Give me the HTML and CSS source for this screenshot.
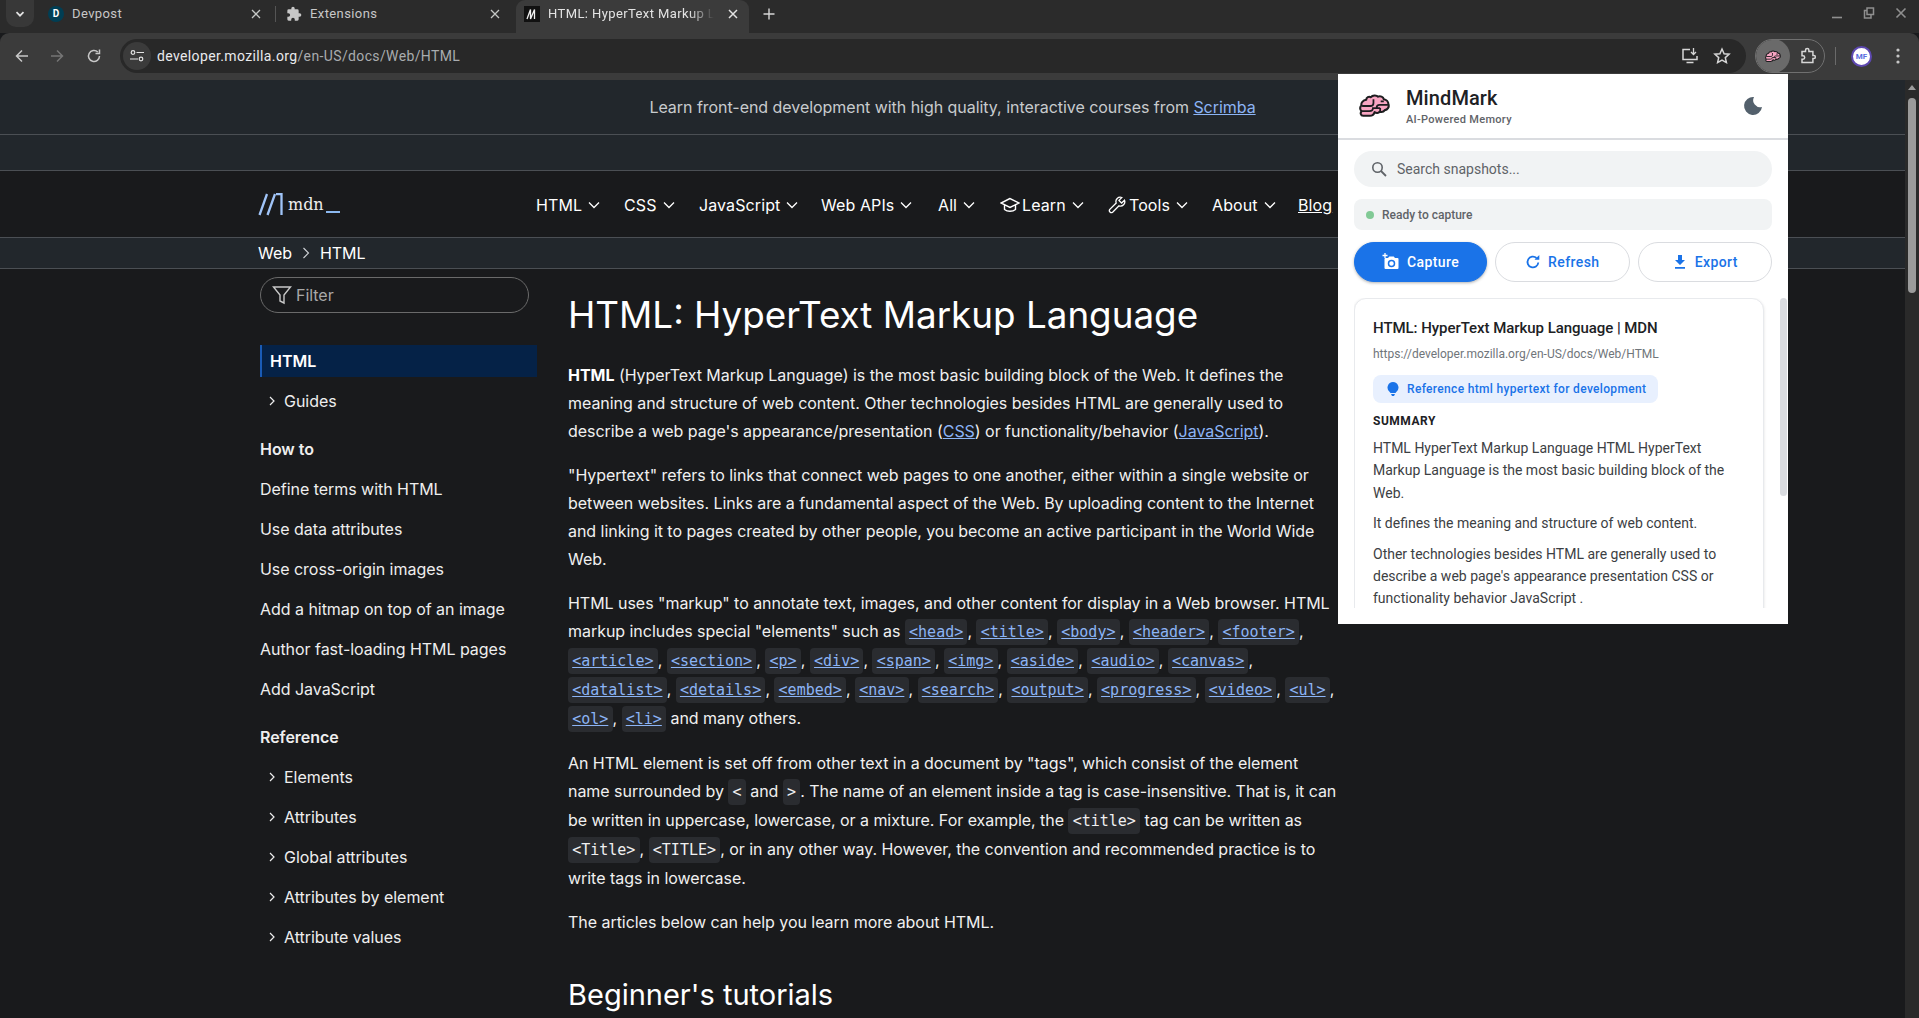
FILE: index.html
```html
<!DOCTYPE html>
<html lang="en">
<head>
<meta charset="utf-8">
<title>HTML: HyperText Markup Language | MDN</title>
<link rel="stylesheet" href="styles.css">
</head>
<body>
<div class="window">
  <header class="tabstrip">
    <div class="tab-search"><svg width="12" height="12" viewBox="0 0 12 12"><path d="M2.500 4.200 6 7.700l3.500-3.500" fill="none" stroke="#e3e3e3" stroke-width="1.700"/></svg></div>
    <div class="tab tab-first">
      <span class="fav fav-d">D</span><span class="tab-title">Devpost</span>
      <svg class="tab-x" width="12" height="12" viewBox="0 0 12 12"><path d="M2 2l8 8M10 2l-8 8" stroke="#c4c7c5" stroke-width="1.300"/></svg>
    </div>
    <div class="tab-sep"></div>
    <div class="tab tab-second">
      <svg class="fav" width="16" height="16" viewBox="0 0 24 24"><path d="M20.500 11H19V7a2 2 0 0 0-2-2h-4V3.500a2.500 2.500 0 0 0-5 0V5H4a2 2 0 0 0-2 2v3.800h1.500a2.700 2.700 0 0 1 0 5.400H2V20a2 2 0 0 0 2 2h3.800v-1.500a2.700 2.700 0 0 1 5.400 0V22H17a2 2 0 0 0 2-2v-4h1.500a2.500 2.500 0 0 0 0-5z" fill="#c7c7c7"/></svg>
      <span class="tab-title">Extensions</span>
      <svg class="tab-x" width="12" height="12" viewBox="0 0 12 12"><path d="M2 2l8 8M10 2l-8 8" stroke="#c4c7c5" stroke-width="1.300"/></svg>
    </div>
    <div class="tab tab-active">
      <span class="fav fav-m"><svg width="12" height="12" viewBox="0 0 12 12"><path d="M1 11 4.500 1.500V11L8.500 1.500V11" fill="none" stroke="#f0f0f0" stroke-width="1.300"/></svg></span>
      <span class="tab-title tab-fade">HTML: HyperText Markup Language | MDN</span>
      <svg class="tab-x" width="12" height="12" viewBox="0 0 12 12"><path d="M2 2l8 8M10 2l-8 8" stroke="#e3e3e3" stroke-width="1.500"/></svg>
    </div>
    <svg class="tab-plus" width="14" height="14" viewBox="0 0 14 14"><path d="M7 1.500v11M1.500 7h11" stroke="#d6d6d6" stroke-width="1.400"/></svg>
    <div class="win-controls">
      <svg width="12" height="12" viewBox="0 0 12 12"><path d="M1 10.500h10" stroke="#8f8f8f" stroke-width="1.600"/></svg>
      <svg width="12" height="12" viewBox="0 0 12 12"><path d="M4 1h6.500v6.500H4zM4 3.500H1.500V11h6.500V8" fill="none" stroke="#8f8f8f" stroke-width="1.500"/></svg>
      <svg width="12" height="12" viewBox="0 0 12 12"><path d="M1.500 1.500l9 9M10.500 1.500l-9 9" stroke="#8f8f8f" stroke-width="1.600"/></svg>
    </div>
  </header>

  <nav class="toolbar">
    <svg class="tb-icon" width="16" height="16" viewBox="0 0 16 16"><path d="M14 8H2.500M8 2.500 2.500 8 8 13.500" fill="none" stroke="#c7c7c7" stroke-width="1.500"/></svg>
    <svg class="tb-icon tb-forward" width="16" height="16" viewBox="0 0 16 16"><path d="M2 8h11.500M8 2.500 13.500 8 8 13.500" fill="none" stroke="#757575" stroke-width="1.500"/></svg>
    <svg class="tb-icon tb-reload" width="16" height="16" viewBox="0 0 16 16"><path d="M13.500 8A5.500 5.500 0 1 1 11.800 4M13.500 1.500v4h-4" fill="none" stroke="#c7c7c7" stroke-width="1.500"/></svg>
    <div class="omnibox">
      <span class="tune"><svg width="16" height="16" viewBox="0 0 16 16"><circle cx="4" cy="4.500" r="1.800" fill="none" stroke="#e3e3e3" stroke-width="1.200"/><path d="M7.500 4.500H15M1 11h8" stroke="#e3e3e3" stroke-width="1.200"/><circle cx="12" cy="11" r="1.800" fill="none" stroke="#e3e3e3" stroke-width="1.200"/></svg></span>
      <span class="url"><span class="url-host">developer.mozilla.org</span>/en-US/docs/Web/HTML</span>
      <svg class="omni-install" width="18" height="18" viewBox="0 0 18 18"><path d="M9 2.500H2v10h14V9M5.500 15.500h7" fill="none" stroke="#d6d6d6" stroke-width="1.500"/><path d="M12.500 1v6M10 5l2.500 2.500L15 5" fill="none" stroke="#d6d6d6" stroke-width="1.300"/></svg>
      <svg class="omni-star" width="18" height="18" viewBox="0 0 18 18"><path d="M9 2l2.100 4.700 5 .5-3.800 3.400 1.100 5L9 13l-4.400 2.600 1.100-5L1.900 7.200l5-.5z" fill="none" stroke="#d6d6d6" stroke-width="1.500"/></svg>
    </div>
    <div class="ext-pill">
      <span class="ext-active"><svg width="16" height="13" viewBox="0 0 30 23"><use href="#brain"/></svg></span>
      <svg class="ext-puzzle" width="18" height="18" viewBox="0 0 18 18"><path d="M3 4.500h3.500V3.200a1.700 1.700 0 0 1 3.400 0v1.300h4v4h1a1.500 1.500 0 0 1 0 3h-1v4H3v-3.300h1a1.700 1.700 0 0 0 0-3.400H3z" fill="none" stroke="#d6d6d6" stroke-width="1.500"/></svg>
    </div>
    <div class="tb-divider"></div>
    <div class="avatar"><span>MF</span></div>
    <svg class="tb-menu" width="4" height="16" viewBox="0 0 4 16"><circle cx="2" cy="2" r="1.600" fill="#c7c7c7"/><circle cx="2" cy="8" r="1.600" fill="#c7c7c7"/><circle cx="2" cy="14" r="1.600" fill="#c7c7c7"/></svg>
  </nav>

  <div class="viewport">
    <div class="page">
      <div class="banner">Learn front-end development with high quality, interactive courses from <a href="#">Scrimba</a></div>
      <div class="stripe"></div>
      <div class="mdn-nav">
        <a class="logo" href="#">
          <svg width="26" height="23" viewBox="0 0 26 23"><path d="M1.500 22 9 1M9.500 22 17 1M18 1h5.500v21" fill="none" stroke="#a0c4f8" stroke-width="2.300"/></svg>
          <span class="logo-text">mdn</span><span class="logo-bar"></span>
        </a>
        <ul class="menu">
          <li class="m-html">HTML<svg class="chev"><use href="#chev"/></svg></li>
          <li class="m-css">CSS<svg class="chev"><use href="#chev"/></svg></li>
          <li class="m-js">JavaScript<svg class="chev"><use href="#chev"/></svg></li>
          <li class="m-web">Web APIs<svg class="chev"><use href="#chev"/></svg></li>
          <li class="m-all">All<svg class="chev"><use href="#chev"/></svg></li>
          <li class="m-learn"><svg width="20" height="16" viewBox="0 0 20 16"><path d="M10 1.500 1 6l9 4.500L19 6zM4.500 8v4.500c3 2.300 8 2.300 11 0V8" fill="none" stroke="#fff" stroke-width="1.400"/></svg>Learn<svg class="chev"><use href="#chev"/></svg></li>
          <li class="m-tools"><svg width="18" height="18" viewBox="0 0 18 18"><path d="M16.500 4.200 13.600 7 11 4.400l2.800-2.900a4.300 4.300 0 0 0-5.600 5.500L1.800 13.400a2 2 0 0 0 2.800 2.800L11 9.800a4.300 4.300 0 0 0 5.500-5.600z" fill="none" stroke="#fff" stroke-width="1.300"/></svg>Tools<svg class="chev"><use href="#chev"/></svg></li>
          <li class="m-about">About<svg class="chev"><use href="#chev"/></svg></li>
          <li class="m-blog"><a href="#">Blog</a></li>
        </ul>
      </div>
      <div class="crumbs"><span>Web</span><svg width="12" height="12" viewBox="0 0 12 12"><path d="M3.500 1 8.500 6l-5 5" fill="none" stroke="#cfd2d6" stroke-width="1.100"/></svg><span>HTML</span></div>
      <div class="main">
        <aside class="sidebar">
          <div class="filter"><svg width="20" height="20" viewBox="0 0 20 20"><path d="M1.500 2h17l-6.500 8v8l-4-2v-6z" fill="none" stroke="#c8c8c8" stroke-width="1.400"/></svg><span>Filter</span></div>
          <div class="side-current">HTML</div>
          <div class="side-item side-sub"><svg class="side-chev"><use href="#sidechev"/></svg>Guides</div>
          <div class="side-head">How to</div>
          <div class="side-item">Define terms with HTML</div>
          <div class="side-item">Use data attributes</div>
          <div class="side-item">Use cross-origin images</div>
          <div class="side-item">Add a hitmap on top of an image</div>
          <div class="side-item">Author fast-loading HTML pages</div>
          <div class="side-item">Add JavaScript</div>
          <div class="side-head">Reference</div>
          <div class="side-item side-sub"><svg class="side-chev"><use href="#sidechev"/></svg>Elements</div>
          <div class="side-item side-sub"><svg class="side-chev"><use href="#sidechev"/></svg>Attributes</div>
          <div class="side-item side-sub"><svg class="side-chev"><use href="#sidechev"/></svg>Global attributes</div>
          <div class="side-item side-sub"><svg class="side-chev"><use href="#sidechev"/></svg>Attributes by element</div>
          <div class="side-item side-sub"><svg class="side-chev"><use href="#sidechev"/></svg>Attribute values</div>
        </aside>
        <article class="article">
          <h1>HTML: HyperText Markup Language</h1>
          <p><strong>HTML</strong> (HyperText Markup Language) is the most basic building block of the Web. It defines the meaning and structure of web content. Other technologies besides HTML are generally used to describe a web page's appearance/presentation (<a href="#">CSS</a>) or functionality/behavior (<a href="#">JavaScript</a>).</p>
          <p>"Hypertext" refers to links that connect web pages to one another, either within a single website or between websites. Links are a fundamental aspect of the Web. By uploading content to the Internet and linking it to pages created by other people, you become an active participant in the World Wide Web.</p>
          <p>HTML uses "markup" to annotate text, images, and other content for display in a Web browser. HTML markup includes special "elements" such as <a href="#"><code>&lt;head&gt;</code></a>, <a href="#"><code>&lt;title&gt;</code></a>, <a href="#"><code>&lt;body&gt;</code></a>, <a href="#"><code>&lt;header&gt;</code></a>, <a href="#"><code>&lt;footer&gt;</code></a>, <a href="#"><code>&lt;article&gt;</code></a>, <a href="#"><code>&lt;section&gt;</code></a>, <a href="#"><code>&lt;p&gt;</code></a>, <a href="#"><code>&lt;div&gt;</code></a>, <a href="#"><code>&lt;span&gt;</code></a>, <a href="#"><code>&lt;img&gt;</code></a>, <a href="#"><code>&lt;aside&gt;</code></a>, <a href="#"><code>&lt;audio&gt;</code></a>, <a href="#"><code>&lt;canvas&gt;</code></a>, <a href="#"><code>&lt;datalist&gt;</code></a>, <a href="#"><code>&lt;details&gt;</code></a>, <a href="#"><code>&lt;embed&gt;</code></a>, <a href="#"><code>&lt;nav&gt;</code></a>, <a href="#"><code>&lt;search&gt;</code></a>, <a href="#"><code>&lt;output&gt;</code></a>, <a href="#"><code>&lt;progress&gt;</code></a>, <a href="#"><code>&lt;video&gt;</code></a>, <a href="#"><code>&lt;ul&gt;</code></a>, <a href="#"><code>&lt;ol&gt;</code></a>, <a href="#"><code>&lt;li&gt;</code></a> and many others.</p>
          <p>An HTML element is set off from other text in a document by "tags", which consist of the element name surrounded by <code>&lt;</code> and <code>&gt;</code>. The name of an element inside a tag is case-insensitive. That is, it can be written in uppercase, lowercase, or a mixture. For example, the <code>&lt;title&gt;</code> tag can be written as <code>&lt;Title&gt;</code>, <code>&lt;TITLE&gt;</code>, or in any other way. However, the convention and recommended practice is to write tags in lowercase.</p>
          <p>The articles below can help you learn more about HTML.</p>
          <h2>Beginner's tutorials</h2>
        </article>
      </div>
    </div>
    <div class="scrollbar">
      <span class="sb-arrow"></span>
      <span class="sb-thumb"></span>
    </div>
  </div>

  <section class="popup">
    <div class="pop-head">
      <svg class="pop-logo" width="31" height="24" viewBox="0 0 30 23">
        <g id="brain">
          <path d="M7 5.500C7 3 9.500 2 11.500 3 13 .8 17 .8 18.500 2.500c2-1 5 0 5.500 2.500 2.500.3 4.500 2.500 4.500 5 1 2.500-1 5-3.500 5.500-1 1.500-3 2-5 1.500-1 1.500-3.500 1.500-5 .5-.5 2-2 3.500-4.500 3.500H4c-2.500 0-3-3-1.500-4.500C.5 15 .8 12 2.500 11 1.500 8.500 4 6 7 5.500z" fill="#f8a5c2" stroke="#1d1d1f" stroke-width="2" stroke-linejoin="round"/>
          <path d="M3 11.500h8c2 0 3-1 3-3M14 8.500V5M3 16.500h7c2 0 3.500-1 3.500-3h7M17 13.500c0-2 1-3 3-3h8M20.500 17V13.500M21 7h3" fill="none" stroke="#1d1d1f" stroke-width="1.700"/>
        </g>
      </svg>
      <div class="pop-brand">
        <div class="pop-title">MindMark</div>
        <div class="pop-sub">AI-Powered Memory</div>
      </div>
      <svg class="pop-moon" width="20" height="20" viewBox="0 0 20 20"><path d="M11 1A9 9 0 1 0 19 11 7 7 0 0 1 11 1z" fill="#53606c"/></svg>
    </div>
    <div class="pop-body">
      <div class="search">
        <svg width="18" height="18" viewBox="0 0 18 18"><circle cx="7.500" cy="7.500" r="4.700" fill="none" stroke="#5f6368" stroke-width="1.600"/><path d="M11 11l5 5" stroke="#5f6368" stroke-width="1.800"/></svg>
        <span>Search snapshots...</span>
      </div>
      <div class="status"><span class="dot"></span>Ready to capture</div>
      <div class="actions">
        <button class="btn btn-primary"><svg width="18" height="18" viewBox="0 0 18 18"><path d="M3.500 5H6l1.300-1.500h4.400L13 5h2.500A1 1 0 0 1 16.500 6v9a1 1 0 0 1-1 1h-12a1 1 0 0 1-1-1V6a1 1 0 0 1 1-1z" fill="#fff"/><circle cx="9.500" cy="10.500" r="3" fill="none" stroke="#1a73e8" stroke-width="1.500"/><path d="M3 0v5M.5 2.500h5" stroke="#fff" stroke-width="1.300"/></svg>Capture</button>
        <button class="btn"><svg width="16" height="16" viewBox="0 0 16 16"><path d="M13.300 8.500A5.400 5.400 0 1 1 11.500 4" fill="none" stroke="#1a73e8" stroke-width="1.800"/><path d="M9.500 5.800h4.800V1z" fill="#1a73e8"/></svg>Refresh</button>
        <button class="btn"><svg width="16" height="16" viewBox="0 0 16 16"><path d="M6 1h4v5h3L8 11 3 6h3zM3 13h10v1.800H3z" fill="#1a73e8"/></svg>Export</button>
      </div>
      <div class="scroller">
        <div class="card">
          <div class="card-title">HTML: HyperText Markup Language | MDN</div>
          <div class="card-url">https://developer.mozilla.org/en-US/docs/Web/HTML</div>
          <div class="chip"><svg width="12" height="14" viewBox="0 0 12 14"><path d="M6 0a5.500 5.500 0 0 1 3.500 9.700c-.5.400-.8 1-1 1.300h-5c-.2-.3-.5-.9-1-1.300A5.500 5.500 0 0 1 6 0zM4 12h4l-1 2H5z" fill="#1a73e8"/></svg>Reference html hypertext for development</div>
          <div class="card-label">SUMMARY</div>
          <p>HTML HyperText Markup Language HTML HyperText Markup Language is the most basic building block of the Web.</p>
          <p>It defines the meaning and structure of web content.</p>
          <p>Other technologies besides HTML are generally used to describe a web page's appearance presentation CSS or functionality behavior JavaScript .</p>
        </div>
        <div class="pop-thumb"></div>
      </div>
    </div>
  </section>
</div>
<svg class="defs" width="0" height="0">
  <symbol id="chev" viewBox="0 0 12 12"><path d="M1 3.500 6 8.500l5-5" fill="none" stroke="#fff" stroke-width="1.300"/></symbol>
  <symbol id="sidechev" viewBox="0 0 10 10"><path d="M3 1l4 4-4 4" fill="none" stroke="#eee" stroke-width="1.200"/></symbol>
</svg>
</body>
</html>
```
FILE: styles.css
```css
* { box-sizing: border-box; }
html, body { margin: 0; height: 100%; overflow: hidden; background: #191a1c; }
ul { list-style: none; margin: 0; padding: 0; }
.defs { position: absolute; }
.window { position: relative; width: 1919px; height: 1018px; display: flex; flex-direction: column; overflow: hidden; font-family: Roboto, sans-serif; }

/* browser chrome */
.tabstrip { height: 33px; flex: none; display: flex; align-items: center; background: #2b2b2b; color: #c7c7c7; font-size: 12px; padding-left: 6px; }
.tab-search { width: 28px; height: 27px; margin-bottom: 6px; background: #383838; border-radius: 0 0 10px 10px; display: flex; align-items: center; justify-content: center; }
.tab { height: 33px; display: flex; align-items: center; position: relative; padding-bottom: 6px; }
.tab-first { width: 235px; margin-left: 6px; padding-left: 8px; }
.tab-sep { width: 1px; height: 16px; background: #555; margin-bottom: 6px; }
.tab-second { width: 240px; padding-left: 10px; }
.tab-active { width: 233px; background: #3b3b3b; border-radius: 9px 9px 0 0; padding-left: 8px; color: #e3e3e3; }
.fav { width: 16px; height: 16px; flex: none; }
.fav-d { border-radius: 50%; background: #003e54; color: #fff; font-size: 10px; font-weight: 700; display: flex; align-items: center; justify-content: center; }
.fav-m { background: #111; display: flex; align-items: center; justify-content: center; }
.tab-title { margin-left: 8px; font-size: 13px; letter-spacing: .4px; white-space: nowrap; overflow: hidden; }
.tab-fade { width: 166px; -webkit-mask-image: linear-gradient(to right, #000 85%, transparent); mask-image: linear-gradient(to right, #000 85%, transparent); }
.tab-x { margin-left: auto; margin-right: 10px; flex: none; }
.tab-second .tab-x { margin-right: 15px; }
.tab-first .tab-x { margin-right: 13px; }
.tab-plus { margin: 0 0 6px 13px; }
.win-controls { margin-left: auto; display: flex; gap: 20px; padding-right: 12px; margin-top: -8px; }

.toolbar { height: 47px; flex: none; background: #3b3b3b; display: flex; align-items: center; padding: 0 0 1px 14px; position: relative; border-radius: 9px 9px 0 0; }
.tb-icon { flex: none; }
.tb-forward { margin-left: 19px; }
.tb-reload { margin-left: 21px; }
.omnibox { width: 1626px; height: 34px; margin-left: 18px; background: #282828; border-radius: 17px; display: flex; align-items: center; padding: 0 0 0 3px; }
.tune { width: 28px; height: 28px; border-radius: 50%; background: #3b3b3b; display: flex; align-items: center; justify-content: center; flex: none; }
.url { margin-left: 6px; font-size: 14px; color: #a9acaf; letter-spacing: .37px; }
.url-host { color: #e8eaed; }
.omni-install { margin-left: auto; }
.omni-star { margin-left: 14px; margin-right: 15px; }
.ext-pill { width: 70px; height: 34px; margin-left: 9px; border: 1px solid #707070; border-radius: 17px; display: flex; align-items: center; overflow: hidden; flex: none; }
.ext-active { width: 34px; height: 34px; background: #6a6a6a; border-radius: 50%; display: flex; align-items: center; justify-content: center; flex: none; }
.ext-puzzle { margin-left: 9px; }
.tb-divider { width: 1px; height: 18px; background: #6a6a6a; margin-left: 10px; }
.avatar { width: 21px; height: 21px; margin-left: 15px; border-radius: 50%; border: 2.500px solid #5d48b0; background: #fff; display: flex; align-items: center; justify-content: center; color: #5b6ee0; font-size: 8px; font-weight: 700; flex: none; }
.tb-menu { margin-left: 24px; }

/* page */
.viewport { flex: 1; min-height: 0; display: flex; border-top: 1px solid #4a4a4a; margin-top: -1px; }
.page { flex: 1; min-width: 0; font-family: Inter, sans-serif; color: #fff; font-size: 16px; letter-spacing: -.04px; }
.page a { color: #8cb4f5; }
.banner { height: 55px; background: #22272c; border-bottom: 1px solid #4b4f54; line-height: 54px; text-align: center; color: #c8cbce; white-space: nowrap; }
.stripe { height: 36px; background: #22272c; border-bottom: 1px solid #4b4f54; }
.mdn-nav { height: 67px; background: #191a1c; border-bottom: 1px solid #4b4f54; display: flex; align-items: center; padding-left: 258px; }
.logo { display: flex; align-items: center; text-decoration: none; width: 278px; position: relative; }
.logo-text { font-family: "DejaVu Serif", "Liberation Serif", serif; font-size: 16px; color: #eee; margin-left: 4px; }
.logo-bar { width: 14px; height: 2px; background: #8cb9f0; margin: 15px 0 0 2px; }
.menu { display: flex; align-items: center; padding-top: 2px; letter-spacing: .1px; }
.menu li { display: flex; align-items: center; white-space: nowrap; color: #fff; }
.chev { width: 12px; height: 12px; margin-left: 6px; }
.m-html { width: 88px; } .m-css { width: 75px; } .m-js { width: 122px; } .m-web { width: 117px; } .m-all { width: 62px; } .m-learn { width: 108px; } .m-tools { width: 104px; } .m-about { width: 86px; }
.page .m-blog a { color: #fff; }
.m-learn svg:first-child { margin-right: 2px; }
.m-tools svg:first-child { margin-right: 3px; }
.crumbs { height: 31px; background: #22272c; border-bottom: 1px solid #4b4f54; display: flex; align-items: center; gap: 8px; padding-left: 258px; }
.main { display: grid; grid-template-columns: 277px 772px; column-gap: 31px; padding-left: 260px; }
.sidebar { padding-top: 8px; color: #eee; }
.filter { width: 269px; height: 36px; border: 1px solid #6a6a6a; border-radius: 18px; display: flex; align-items: center; padding-left: 11px; gap: 4px; color: #a8a8a8; margin-bottom: 32px; }
.side-current { height: 32px; background: #052247; border-left: 2px solid #1a5bb5; display: flex; align-items: center; padding-left: 8px; font-weight: 600; color: #fff; margin-bottom: 4px; }
.side-item { height: 40px; display: flex; align-items: center; }
.side-sub { padding-left: 7px; }
.side-chev { width: 10px; height: 10px; margin-right: 7px; }
.side-head { height: 40px; margin-top: 8px; display: flex; align-items: center; font-weight: 600; }
.article { padding-top: 22px; }
.article h1 { margin: 0 0 22px; font-size: 36.800px; font-weight: 400; line-height: 48px; color: #fff; letter-spacing: 0; }
.article h2 { margin: 39px 0 0; font-size: 29px; font-weight: 400; line-height: 40px; letter-spacing: 0; }
.article p { margin: 0 0 16px; line-height: 28px; color: #f0f0f0; }
.article strong { color: #fff; font-weight: 700; }
code { font-family: "DejaVu Sans Mono", monospace; font-size: 15px; line-height: 27px; letter-spacing: 0; background: #2a2c30; padding: 4px 4.200px; border-radius: 4px; }
.scrollbar { width: 14px; flex: none; background: #2a2a2a; position: relative; display: flex; flex-direction: column; align-items: center; padding-top: 5px; }
.sb-arrow { width: 0; height: 0; border: 4px solid transparent; border-top: 0; border-bottom: 5px solid #9b9b9b; }
.sb-thumb { width: 8px; height: 195px; background: #9b9b9b; border-radius: 4px; margin-top: 8px; }

/* popup */
.popup { position: absolute; left: 1338px; top: 74px; width: 450px; height: 550px; background: #fff; overflow: hidden; display: flex; flex-direction: column; color: #202124; }
.pop-head { height: 66px; flex: none; display: flex; align-items: center; padding: 0 25px 0 21px; border-bottom: 2px solid #dadce0; }
.pop-logo { flex: none; }
.pop-brand { margin-left: 16px; }
.pop-title { font-size: 20px; font-weight: 500; line-height: 26px; color: #202124; letter-spacing: .1px; }
.pop-sub { font-size: 11px; font-weight: 500; line-height: 17px; color: #5f6368; letter-spacing: .3px; }
.pop-moon { margin-left: auto; }
.pop-body { flex: 1; min-height: 0; padding: 11px 0 16px 16px; display: flex; flex-direction: column; }
.search { width: 418px; height: 36px; flex: none; background: #f1f3f4; border-radius: 18px; display: flex; align-items: center; padding-left: 16px; gap: 9px; font-size: 14px; color: #5f6368; }
.status { width: 418px; height: 31px; flex: none; margin-top: 12px; background: #f1f3f4; border-radius: 8px; display: flex; align-items: center; padding-left: 12px; font-size: 12px; font-weight: 500; color: #5f6368; }
.dot { width: 8px; height: 8px; border-radius: 50%; background: #81c995; margin-right: 8px; }
.actions { width: 418px; flex: none; margin-top: 12px; display: flex; gap: 8px; }
.btn { flex: 1; height: 40px; border: 1px solid #dadce0; border-radius: 20px; background: #fff; color: #1a73e8; font: 500 14px Roboto, sans-serif; display: flex; align-items: center; justify-content: center; gap: 7px; padding: 0; letter-spacing: .4px; }
.btn-primary { flex: 0 0 133px; background: #1a73e8; border-color: #1a73e8; color: #fff; box-shadow: 0 1px 3px rgba(60,64,67,.4); }
.scroller { flex: 1; min-height: 0; margin-top: 16px; overflow: hidden; display: flex; align-items: flex-start; gap: 16px; }
.card { width: 410px; flex: none; border: 1px solid #e8eaed; border-radius: 12px; padding: 19px 18px 16px; box-shadow: 0 1px 3px rgba(60,64,67,.16); background: #fff; margin: 0; }
.card-title { font-size: 15px; font-weight: 500; line-height: 20px; margin-bottom: 7px; color: #202124; letter-spacing: -.05px; }
.card-url { font-size: 12px; line-height: 18px; color: #70757a; }
.chip { height: 28px; width: 285px; margin-top: 12px; background: #e8f0fe; border-radius: 8px; display: flex; align-items: center; padding-left: 14px; gap: 8px; font-size: 12px; font-weight: 500; color: #1a73e8; letter-spacing: .33px; white-space: nowrap; }
.card-label { font-size: 12px; font-weight: 700; line-height: 16px; margin-top: 10px; letter-spacing: .5px; color: #202124; }
.card p { margin: 8px 0 8px; font-size: 14px; line-height: 22.400px; color: #3c4043; }
.pop-thumb { width: 7px; height: 198px; background: #dadce0; border-radius: 4px; flex: none; }
```
